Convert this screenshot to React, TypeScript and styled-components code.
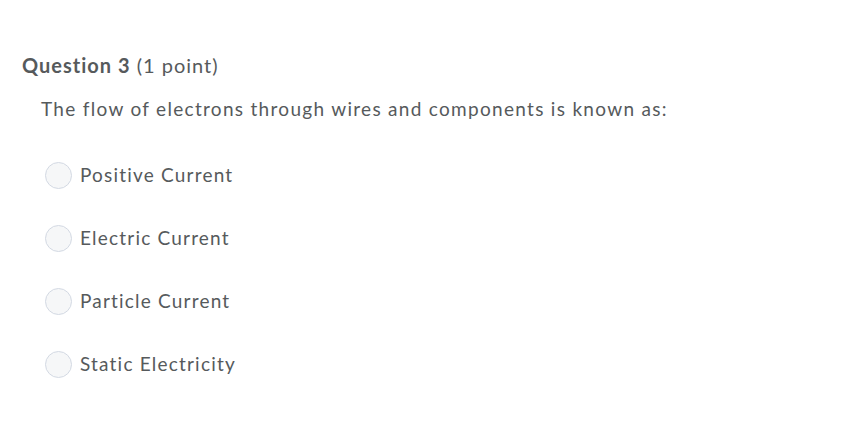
import styled, { createGlobalStyle } from "styled-components";

const GlobalStyle = createGlobalStyle`
  body {
    margin: 0;
    background: #fff;
    font-family: Lato, "Open Sans", sans-serif;
    color: #565a5c;
  }
`;

const Page = styled.div`
  padding: 51px 22px 0;
`;

const Heading = styled.h2`
  margin: 0;
  font-size: 20px;
  font-weight: 400;
  line-height: 28px;
  letter-spacing: 1px;
  color: #565a5c;
  strong {
    font-weight: 700;
  }
`;

const Prompt = styled.p`
  margin: 16px 0 0 19px;
  font-size: 19px;
  line-height: 28px;
  letter-spacing: 1.3px;
`;

const Options = styled.div`
  display: flex;
  flex-direction: column;
  gap: 35px;
  margin: 38px 0 0 23px;
`;

const Option = styled.label`
  display: flex;
  align-items: center;
  gap: 8px;
  font-size: 19px;
  line-height: 28px;
  letter-spacing: 1.2px;
`;

const Radio = styled.span`
  width: 25px;
  height: 25px;
  border-radius: 50%;
  border: 1px solid #d3d9e3;
  background: #f6f7f8;
  flex: none;
`;

const answers = ["Positive Current", "Electric Current", "Particle Current", "Static Electricity"];

export default function App() {
  return (
    <>
      <GlobalStyle />
      <Page>
        <Heading>
          <strong>Question 3</strong> (1 point)
        </Heading>
        <Prompt>The flow of electrons through wires and components is known as:</Prompt>
        <Options>
          {answers.map((a) => (
            <Option key={a}>
              <Radio />
              {a}
            </Option>
          ))}
        </Options>
      </Page>
    </>
  );
}
